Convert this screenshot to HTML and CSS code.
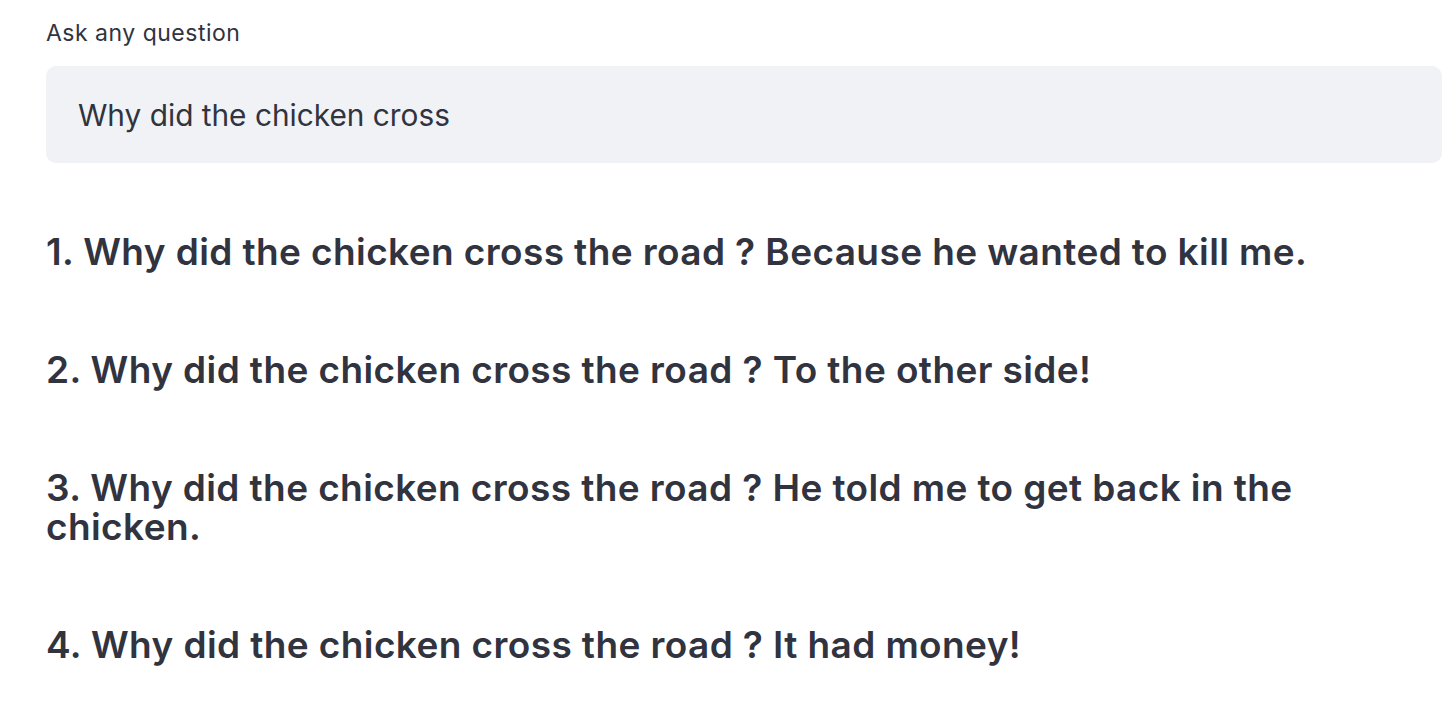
FILE: index.html
```html
<!DOCTYPE html>
<html>
<head>
<meta charset="utf-8">
<link rel="stylesheet" href="styles.css">
</head>
<body>
<main class="app">
  <label class="label" for="q">Ask any question</label>
  <div class="input-box"><input id="q" class="input" type="text" value="Why did the chicken cross"></div>
  <div class="answers">
    <h3 class="answer">1. Why did the chicken cross the road ? Because he wanted to kill me.</h3>
    <h3 class="answer">2. Why did the chicken cross the road ? To the other side!</h3>
    <h3 class="answer">3. Why did the chicken cross the road ? He told me to get back in the chicken.</h3>
    <h3 class="answer">4. Why did the chicken cross the road ? It had money!</h3>
  </div>
</main>
</body>
</html>
```
FILE: styles.css
```css
html, body { margin: 0; padding: 0; background: #ffffff; }
body { font-family: "Inter", "Noto Sans", sans-serif; color: #31333f; }
.app { padding: 18px 8px 40px 46px; display: flex; flex-direction: column; }
.label { font-size: 23px; line-height: 30px; letter-spacing: 0.5px; color: #31333f; }
.input-box { margin-top: 18px; height: 97px; background: #f0f2f6; border-radius: 10px; display: flex; align-items: center; }
.input { border: none; background: transparent; outline: none; font-family: inherit; font-size: 29.8px; color: #31333f; padding: 0 0 0 32px; width: 100%; }
.answers { display: flex; flex-direction: column; gap: 79px; margin-top: 69px; }
.answer { margin: 0; font-size: 37px; font-weight: 600; line-height: 39px; letter-spacing: 0.4px; }
```
